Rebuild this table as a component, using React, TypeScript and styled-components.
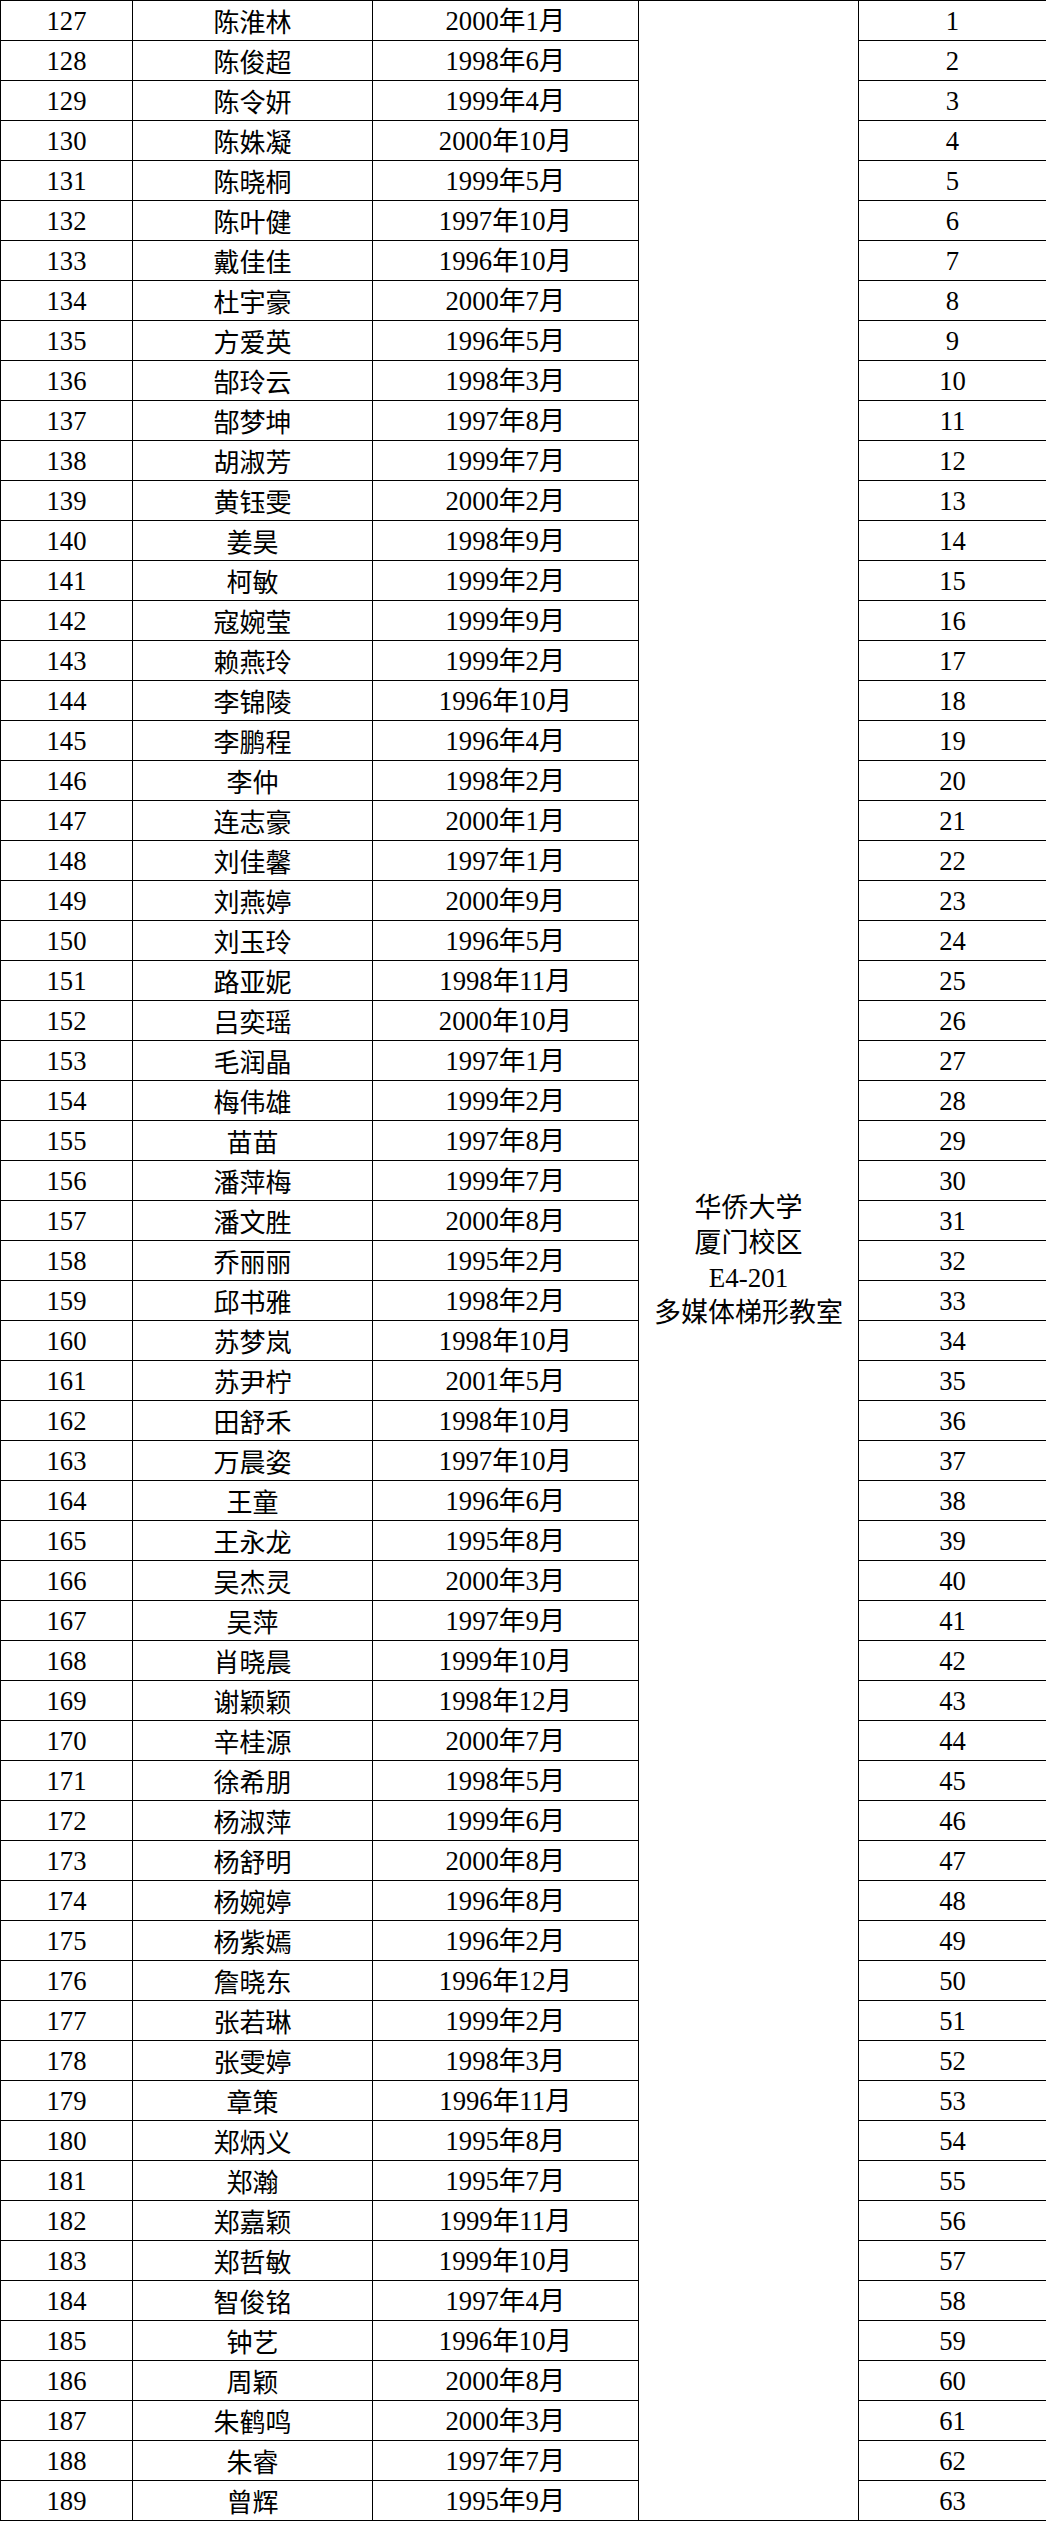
import React from "react";
import styled, { createGlobalStyle } from "styled-components";

const Global = createGlobalStyle`
  html, body { margin: 0; padding: 0; background: #fff; }
  body { font-family: "Liberation Serif", "Noto Sans CJK SC", serif; color: #000; }
`;

const Table = styled.table`
  width: 1046px;
  border-collapse: collapse;
  table-layout: fixed;
  font-size: 26.67px;
`;

const Row = styled.tr`
  height: 40px;
`;

const Cell = styled.td`
  border: 1px solid #000;
  padding: 0;
  height: 39px;
  text-align: center;
  vertical-align: middle;
  line-height: 38px;
  white-space: nowrap;
  overflow: hidden;
`;

const NameCell = styled(Cell)`
  font-family: "Noto Sans CJK SC", sans-serif;
  font-size: 26px;
`;

const PlaceCell = styled.td`
  border: 1px solid #000;
  padding: 0;
  text-align: center;
  vertical-align: middle;
  line-height: 35px;
  font-size: 27px;
`;

const PlaceLine = styled.div`
  font-family: "Liberation Serif", "Noto Sans CJK SC", serif;
`;

const data: [string, string][] = [
  ["陈淮林", "2000年1月"],
  ["陈俊超", "1998年6月"],
  ["陈令妍", "1999年4月"],
  ["陈姝凝", "2000年10月"],
  ["陈晓桐", "1999年5月"],
  ["陈叶健", "1997年10月"],
  ["戴佳佳", "1996年10月"],
  ["杜宇豪", "2000年7月"],
  ["方爱英", "1996年5月"],
  ["郜玲云", "1998年3月"],
  ["郜梦坤", "1997年8月"],
  ["胡淑芳", "1999年7月"],
  ["黄钰雯", "2000年2月"],
  ["姜昊", "1998年9月"],
  ["柯敏", "1999年2月"],
  ["寇婉莹", "1999年9月"],
  ["赖燕玲", "1999年2月"],
  ["李锦陵", "1996年10月"],
  ["李鹏程", "1996年4月"],
  ["李仲", "1998年2月"],
  ["连志豪", "2000年1月"],
  ["刘佳馨", "1997年1月"],
  ["刘燕婷", "2000年9月"],
  ["刘玉玲", "1996年5月"],
  ["路亚妮", "1998年11月"],
  ["吕奕瑶", "2000年10月"],
  ["毛润晶", "1997年1月"],
  ["梅伟雄", "1999年2月"],
  ["苗苗", "1997年8月"],
  ["潘萍梅", "1999年7月"],
  ["潘文胜", "2000年8月"],
  ["乔丽丽", "1995年2月"],
  ["邱书雅", "1998年2月"],
  ["苏梦岚", "1998年10月"],
  ["苏尹柠", "2001年5月"],
  ["田舒禾", "1998年10月"],
  ["万晨姿", "1997年10月"],
  ["王童", "1996年6月"],
  ["王永龙", "1995年8月"],
  ["吴杰灵", "2000年3月"],
  ["吴萍", "1997年9月"],
  ["肖晓晨", "1999年10月"],
  ["谢颖颖", "1998年12月"],
  ["辛桂源", "2000年7月"],
  ["徐希朋", "1998年5月"],
  ["杨淑萍", "1999年6月"],
  ["杨舒明", "2000年8月"],
  ["杨婉婷", "1996年8月"],
  ["杨紫嫣", "1996年2月"],
  ["詹晓东", "1996年12月"],
  ["张若琳", "1999年2月"],
  ["张雯婷", "1998年3月"],
  ["章策", "1996年11月"],
  ["郑炳义", "1995年8月"],
  ["郑瀚", "1995年7月"],
  ["郑嘉颖", "1999年11月"],
  ["郑哲敏", "1999年10月"],
  ["智俊铭", "1997年4月"],
  ["钟艺", "1996年10月"],
  ["周颖", "2000年8月"],
  ["朱鹤鸣", "2000年3月"],
  ["朱睿", "1997年7月"],
  ["曾辉", "1995年9月"],
];

export default function App() {
  return (
    <>
      <Global />
      <Table>
        <colgroup>
          <col style={{ width: 132 }} />
          <col style={{ width: 240 }} />
          <col style={{ width: 266 }} />
          <col style={{ width: 220 }} />
          <col style={{ width: 188 }} />
        </colgroup>
        <tbody>
          {data.map(([name, date], i) => (
            <Row key={i}>
              <Cell>{127 + i}</Cell>
              <NameCell>{name}</NameCell>
              <Cell>{date}</Cell>
              {i === 0 && (
                <PlaceCell rowSpan={data.length}>
                  <PlaceLine>华侨大学</PlaceLine>
                  <PlaceLine>厦门校区</PlaceLine>
                  <PlaceLine>E4-201</PlaceLine>
                  <PlaceLine>多媒体梯形教室</PlaceLine>
                </PlaceCell>
              )}
              <Cell>{i + 1}</Cell>
            </Row>
          ))}
        </tbody>
      </Table>
    </>
  );
}
